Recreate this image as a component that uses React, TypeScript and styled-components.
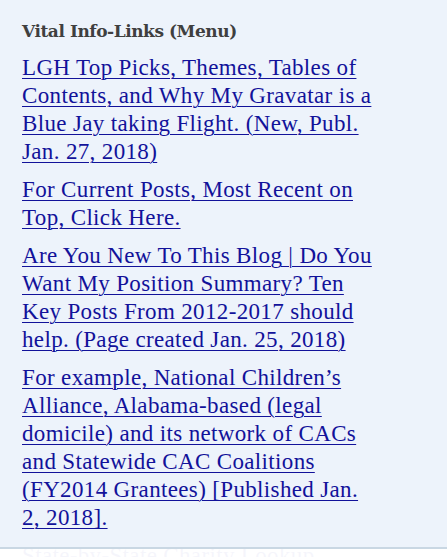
import { FC } from "react";
import styled, { createGlobalStyle } from "styled-components";

const GlobalStyle = createGlobalStyle`
  html, body {
    margin: 0;
    padding: 0;
    background: #edf3fb;
  }
`;

const Widget = styled.aside`
  position: relative;
  width: 447px;
  height: 557px;
  overflow: hidden;
  box-sizing: border-box;
  padding: 19px 70px 0 22px;
  background: #edf3fb;
`;

const Title = styled.h2`
  margin: 0 0 11px 0;
  font-family: "DejaVu Serif", "Liberation Serif", serif;
  font-weight: 700;
  font-size: 17px;
  line-height: 24px;
  letter-spacing: -0.45px;
  color: #3f3f3f;
`;

const LinkList = styled.ul`
  list-style: none;
  margin: 0;
  padding: 0;
  display: flex;
  flex-direction: column;
  gap: 10px;
`;

const Item = styled.li`
  margin: 0;
  font-family: "Liberation Serif", "DejaVu Serif", serif;
  font-size: 23px;
  line-height: 28px;
  letter-spacing: 0.35px;
`;

const Link = styled.a`
  color: #12129a;
  text-decoration: underline;
  text-underline-offset: 3px;
  text-decoration-thickness: 1px;
`;

const Fade = styled.div`
  position: absolute;
  left: 0;
  right: 0;
  top: 547px;
  bottom: 0;
  border-top: 2px solid #c9d7e3;
  background: rgba(255, 255, 255, 0.96);
`;

const links = [
  "LGH Top Picks, Themes, Tables of Contents, and Why My Gravatar is a Blue Jay taking Flight. (New, Publ. Jan. 27, 2018)",
  "For Current Posts, Most Recent on Top, Click Here.",
  "Are You New To This Blog | Do You Want My Position Summary? Ten Key Posts From 2012-2017 should help. (Page created Jan. 25, 2018)",
  "For example, National Children\u2019s Alliance, Alabama-based (legal domicile) and its network of CACs and Statewide CAC Coalitions (FY2014 Grantees) [Published Jan. 2, 2018].",
  "State-by-State Charity Lookup",
];

const App: FC = () => (
  <>
    <GlobalStyle />
    <Widget>
      <Title>Vital Info-Links (Menu)</Title>
      <LinkList>
        {links.map((text) => (
          <Item key={text}>
            <Link href="#">{text}</Link>
          </Item>
        ))}
      </LinkList>
      <Fade />
    </Widget>
  </>
);

export default App;
